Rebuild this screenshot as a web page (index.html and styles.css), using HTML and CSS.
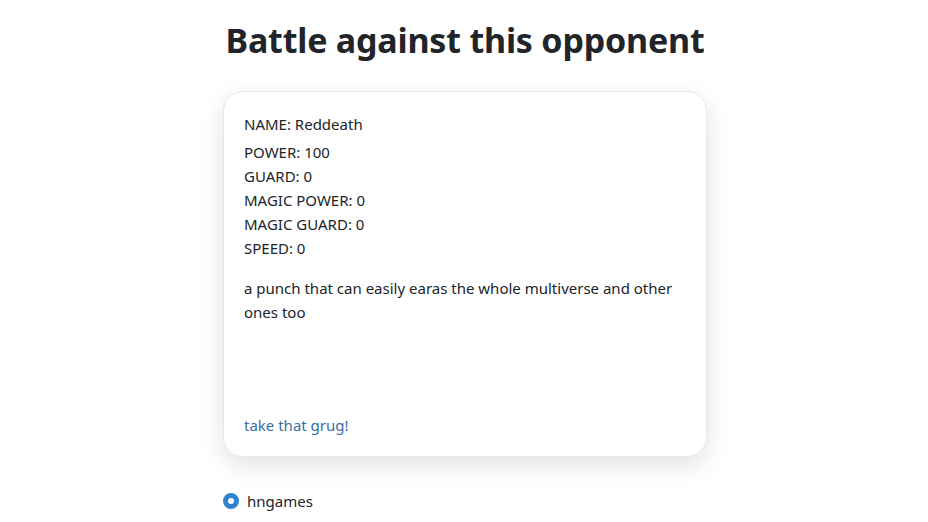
FILE: index.html
```html
<!DOCTYPE html>
<html lang="en">
<head>
  <meta charset="UTF-8" />
  <title>Battle</title>
  <link rel="stylesheet" href="styles.css">
</head>
<body>
  <div class="page">
    <h1 class="title">Battle against this opponent</h1>

    <div class="card">
      <p class="name">NAME: Reddeath</p>
      <div class="stats">
        <div>POWER: 100</div>
        <div>GUARD: 0</div>
        <div>MAGIC POWER: 0</div>
        <div>MAGIC GUARD: 0</div>
        <div>SPEED: 0</div>
      </div>
      <p class="desc">a punch that can easily earas the whole multiverse and other ones too</p>
      <a class="quote" href="#">take that grug!</a>
    </div>

    <label class="choice">
      <input type="radio" name="player" checked />
      <span>hngames</span>
    </label>
  </div>
</body>
</html>
```

FILE: styles.css
```css
body {
  margin: 0;
  background: #fff;
  color: #212529;
  font-family: "Noto Sans", "Open Sans", sans-serif;
  font-size: 15px;
  line-height: 24px;
}

.page {
  width: 484px;
  margin: 0 auto;
  padding: 19px 0 0 2px;
}

.title {
  margin: 0 -40px 29px;
  text-align: center;
  white-space: nowrap;
  font-size: 34px;
  line-height: 43px;
  font-weight: 700;
  letter-spacing: -0.2px;
}

.card {
  display: flex;
  flex-direction: column;
  height: 366px;
  box-sizing: border-box;
  padding: 20px;
  border: 1px solid #e4e7eb;
  border-radius: 20px;
  box-shadow: 0 8px 24px rgba(0, 0, 0, 0.12);
}

.name {
  margin: 0 0 4px;
}

.desc {
  margin: 16px 0 0;
}

.quote {
  margin-top: auto;
  margin-bottom: -1px;
  color: #3a6ea8;
  text-decoration: none;
}

.choice {
  display: flex;
  align-items: center;
  gap: 8px;
  margin-top: 32px;
}

.choice input {
  margin: 0;
  width: 16px;
  height: 16px;
  appearance: none;
  border-radius: 50%;
  background: #fff;
  border: 5px solid #3182ce;
  box-sizing: border-box;
}
```
